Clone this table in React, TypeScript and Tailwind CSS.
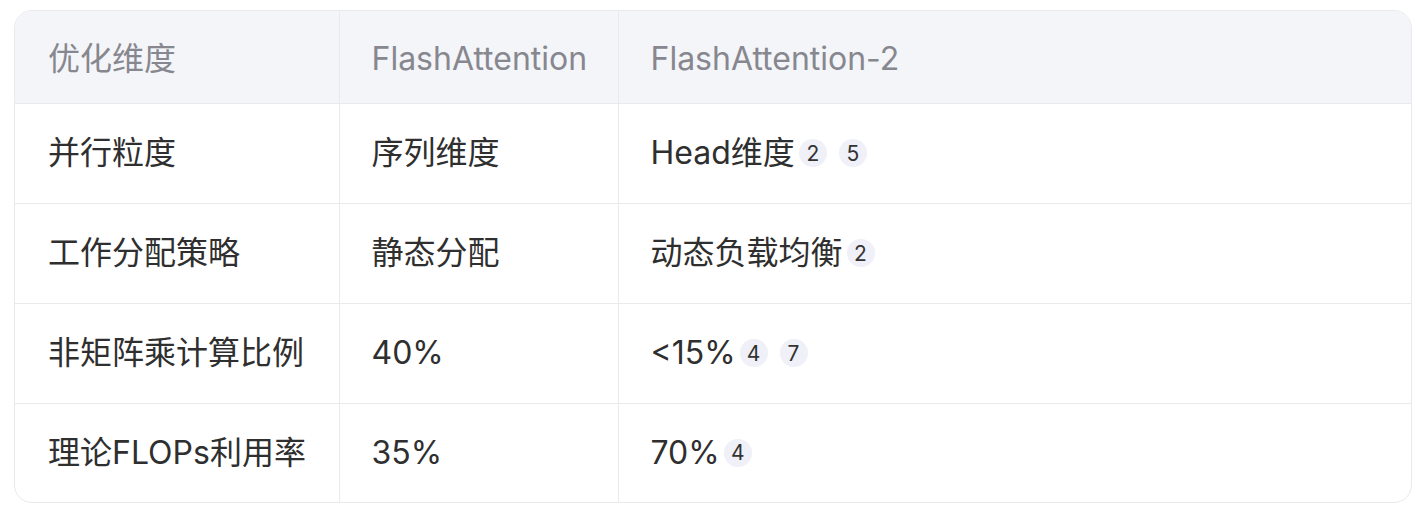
const font = { fontFamily: '"Inter", "Noto Sans CJK SC", sans-serif' };

type Row = { name: string; v1: string; v2: string; refs: number[] };

const rows: Row[] = [
  { name: "并行粒度", v1: "序列维度", v2: "Head维度", refs: [2, 5] },
  { name: "工作分配策略", v1: "静态分配", v2: "动态负载均衡", refs: [2] },
  { name: "非矩阵乘计算比例", v1: "40%", v2: "<15%", refs: [4, 7] },
  { name: "理论FLOPs利用率", v1: "35%", v2: "70%", refs: [4] },
];

const Ref = ({ n }: { n: number }) => (
  <span className="inline-flex h-7 w-7 items-center justify-center rounded-full bg-[#eff0f8] text-[21px] leading-none text-[#333]">
    {n}
  </span>
);

export default function App() {
  return (
    <div className="bg-white min-h-screen pt-[10px] pl-[14px]" style={font}>
      <div className="w-[1398px] overflow-hidden rounded-[18px] border border-[#e9e9ee]">
        <table className="w-full table-fixed border-collapse whitespace-nowrap">
          <colgroup>
            <col className="w-[324px]" />
            <col className="w-[279px]" />
            <col />
          </colgroup>
          <thead>
            <tr className="h-[92px] bg-[#f4f5f8] text-[#87878f] border-b border-[#e9e9ee]">
              <th className="pl-[33px] pt-[5px] text-left font-normal text-[32px] border-r border-[#e9e9ee]">优化维度</th>
              <th className="pl-[32px] pt-[5px] text-left font-normal text-[32px] border-r border-[#e9e9ee]">FlashAttention</th>
              <th className="pl-[32px] pt-[5px] text-left font-normal text-[32px]">FlashAttention-2</th>
            </tr>
          </thead>
          <tbody className="text-[#2f2f2f] text-[32px]">
            {rows.map((r, i) => (
              <tr key={r.name} className={i < rows.length - 1 ? "h-[100px] border-b border-[#e9e9ee]" : "h-[99px]"}>
                <td className="pl-[33px] border-r border-[#e9e9ee]">{r.name}</td>
                <td className="pl-[32px] border-r border-[#e9e9ee]">{r.v1}</td>
                <td className="pl-[32px]">
                  <div className="flex items-center">
                    <span>{r.v2}</span>
                    <span className="ml-[4px] flex items-center gap-3">
                      {r.refs.map((n) => (
                        <Ref key={n} n={n} />
                      ))}
                    </span>
                  </div>
                </td>
              </tr>
            ))}
          </tbody>
        </table>
      </div>
    </div>
  );
}
